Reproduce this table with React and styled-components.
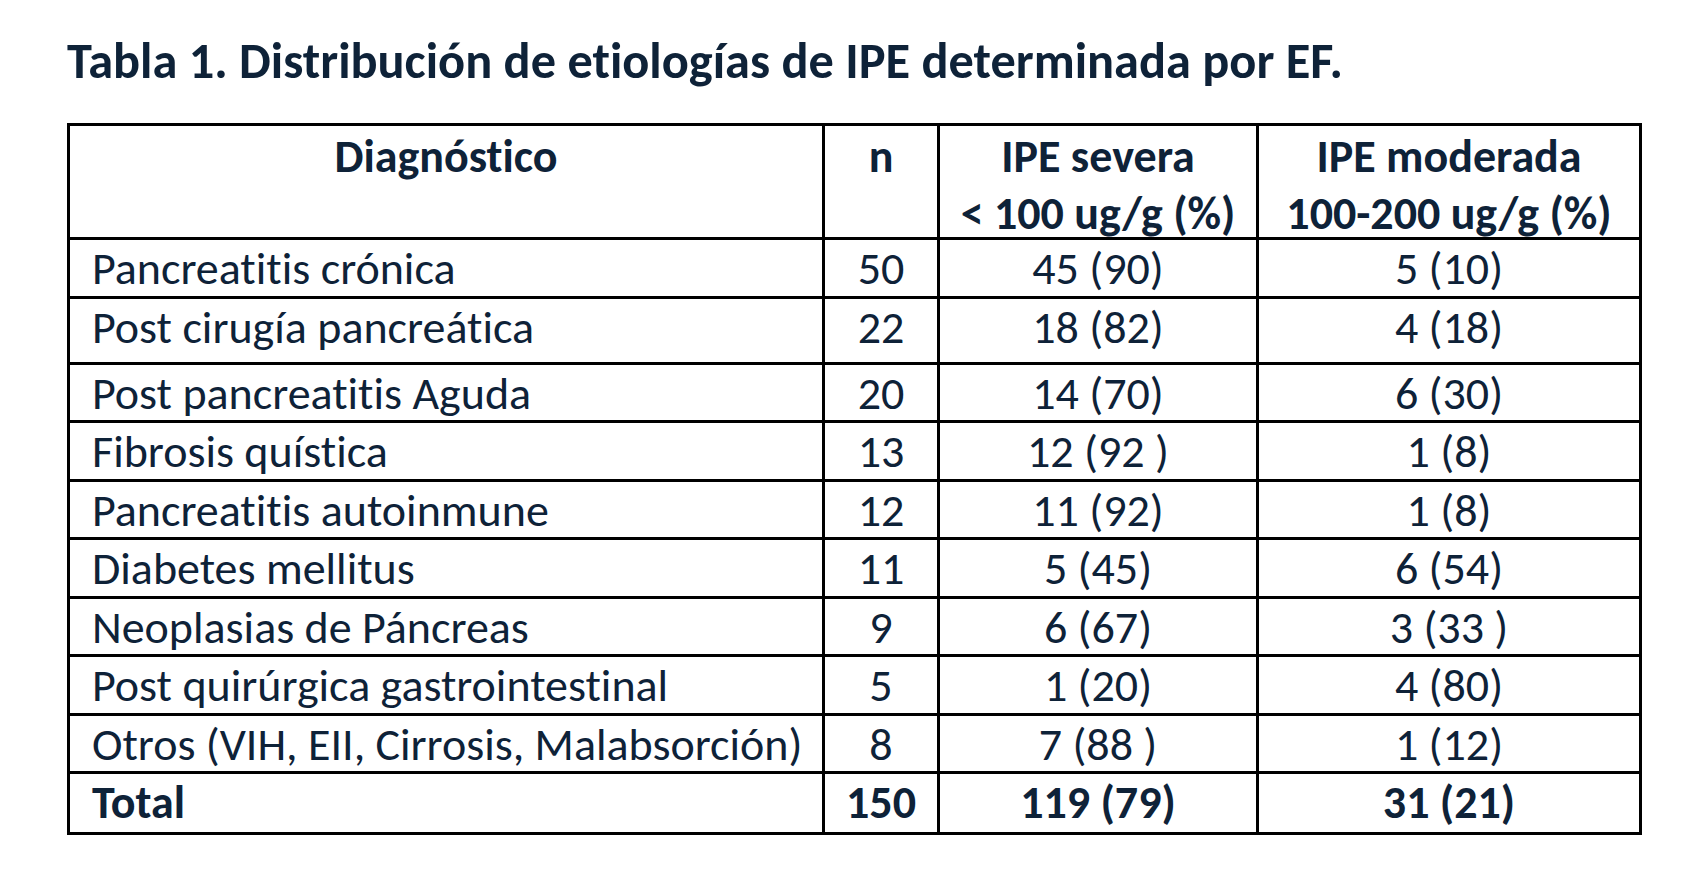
import React from "react";
import styled, { createGlobalStyle } from "styled-components";

const GlobalStyle = createGlobalStyle`
  html, body { margin: 0; padding: 0; background: #ffffff; }
  body {
    font-family: Carlito, "Liberation Sans", sans-serif;
    color: #0e2238;
    font-variant-ligatures: none;
    font-feature-settings: "liga" 0, "clig" 0;
  }
`;

const Page = styled.main`
  padding: 36px 0 0 67px;
`;

const Title = styled.h1`
  margin: 0 0 37px 0;
  font-size: 50.4px;
  line-height: 50px;
  font-weight: 700;
  white-space: nowrap;
`;

const Table = styled.table`
  border-collapse: collapse;
  table-layout: fixed;
  width: 1575px;
  font-size: 46px;
`;

const Col = styled.col`
  width: ${(p) => p.$w}px;
`;

const HeadRow = styled.tr`
  height: 114px;
`;

const Row = styled.tr`
  height: ${(p) => (p.$tall ? 66 : p.$total ? 61 : 58.5)}px;
  font-weight: ${(p) => (p.$total ? 700 : 400)};
`;

const HeadCell = styled.th`
  border: 3px solid #000;
  vertical-align: top;
  text-align: center;
  font-weight: 700;
  padding: 2px 0 0 0;
  white-space: nowrap;
`;

const HeadText = styled.div`
  height: 104px;
  line-height: 57px;
`;

const Cell = styled.td`
  border: 3px solid #000;
  vertical-align: top;
  text-align: ${(p) => (p.$left ? "left" : "center")};
  line-height: 46px;
  padding: ${(p) => (p.$left ? "5px 0 0 22px" : "5px 0 0 0")};
  white-space: nowrap;
`;

const rows = [
  ["Pancreatitis crónica", "50", "45 (90)", "5 (10)"],
  ["Post cirugía pancreática", "22", "18 (82)", "4 (18)", true],
  ["Post pancreatitis Aguda", "20", "14 (70)", "6 (30)"],
  ["Fibrosis quística", "13", "12 (92 )", "1 (8)"],
  ["Pancreatitis autoinmune", "12", "11 (92)", "1 (8)"],
  ["Diabetes mellitus", "11", "5 (45)", "6 (54)"],
  ["Neoplasias de Páncreas", "9", "6 (67)", "3 (33 )"],
  ["Post quirúrgica gastrointestinal", "5", "1 (20)", "4 (80)"],
  ["Otros (VIH, EII, Cirrosis, Malabsorción)", "8", "7 (88 )", "1 (12)"],
];

export default function App() {
  return (
    <Page>
      <GlobalStyle />
      <Title>Tabla 1. Distribución de etiologías de IPE determinada por EF.</Title>
      <Table>
        <colgroup>
          <Col $w={755} />
          <Col $w={115} />
          <Col $w={319} />
          <Col $w={383} />
        </colgroup>
        <thead>
          <HeadRow>
            <HeadCell>
              <HeadText>Diagnóstico</HeadText>
            </HeadCell>
            <HeadCell>
              <HeadText>n</HeadText>
            </HeadCell>
            <HeadCell>
              <HeadText>
                IPE severa
                <br />
                &lt; 100 ug/g (%)
              </HeadText>
            </HeadCell>
            <HeadCell>
              <HeadText>
                IPE moderada
                <br />
                100-200 ug/g (%)
              </HeadText>
            </HeadCell>
          </HeadRow>
        </thead>
        <tbody>
          {rows.map(([d, n, s, m, tall]) => (
            <Row key={d} $tall={tall}>
              <Cell $left>{d}</Cell>
              <Cell>{n}</Cell>
              <Cell>{s}</Cell>
              <Cell>{m}</Cell>
            </Row>
          ))}
          <Row $total>
            <Cell $left>Total</Cell>
            <Cell>150</Cell>
            <Cell>119 (79)</Cell>
            <Cell>31 (21)</Cell>
          </Row>
        </tbody>
      </Table>
    </Page>
  );
}
